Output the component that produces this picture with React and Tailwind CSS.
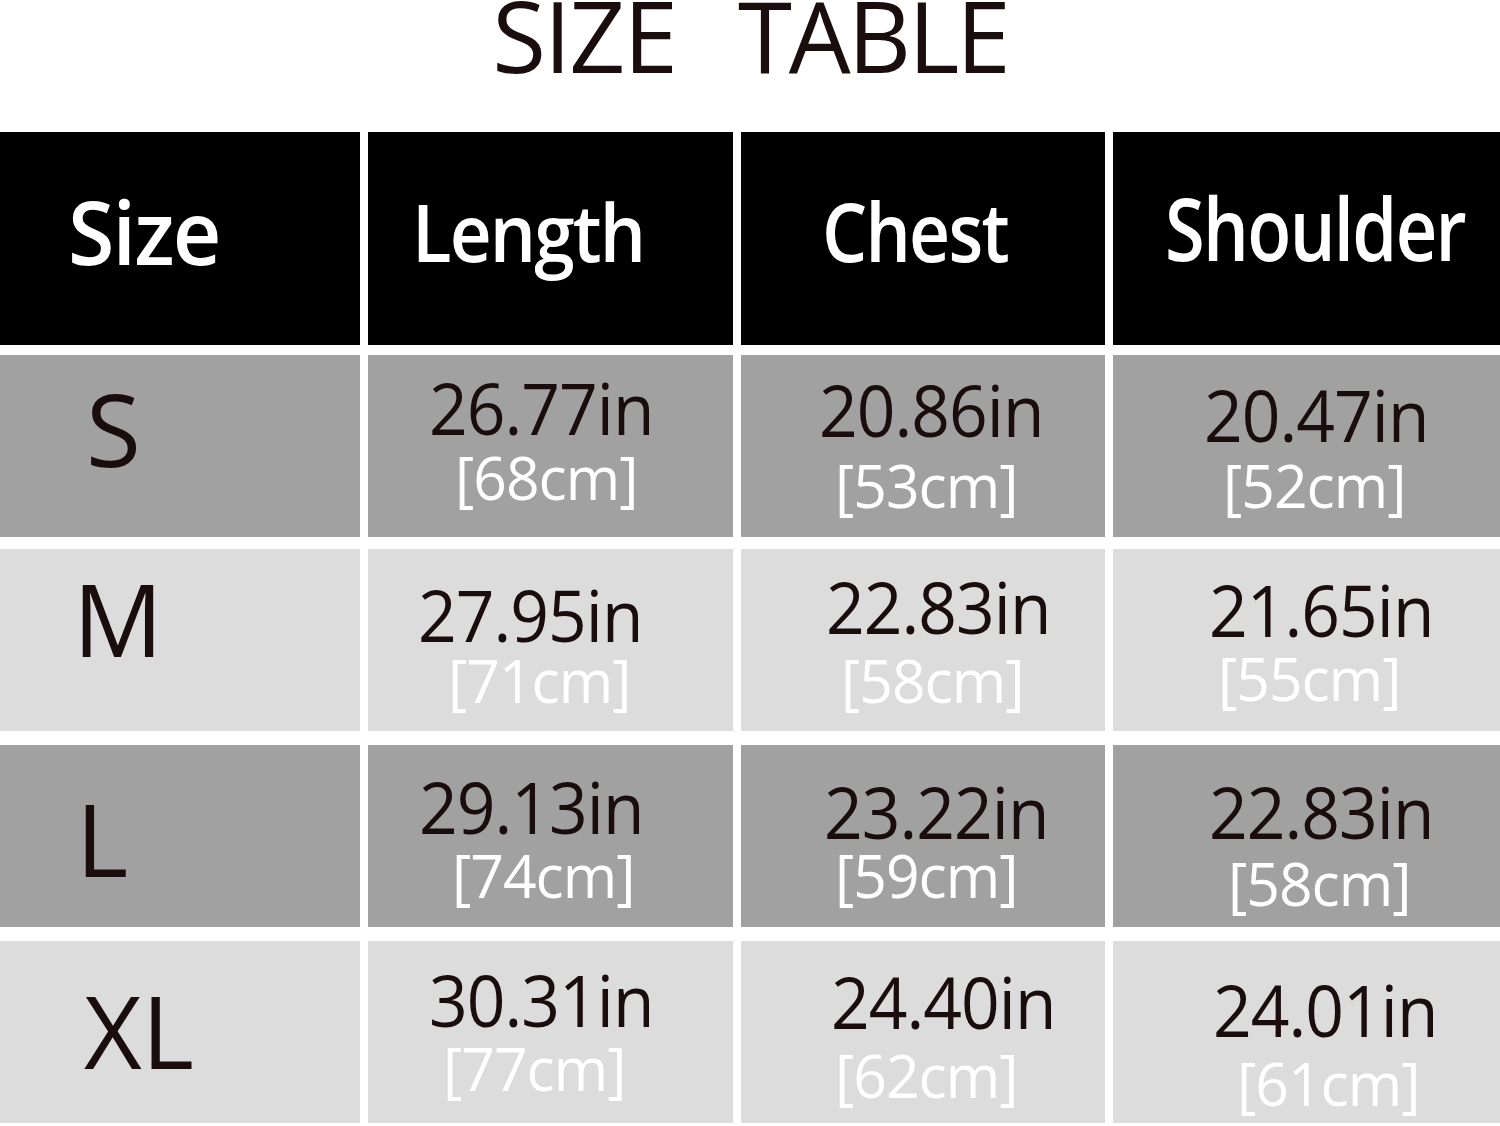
import React from 'react';

const font = { fontFamily: '"Open Sans", "Noto Sans", sans-serif' };

const headers = [
  { label: 'Size', cls: 'text-[88px] ml-[68px] mt-[55px] scale-x-[0.96]' },
  { label: 'Length', cls: 'text-[80px] ml-[44px] mt-[59px] scale-x-[0.91]' },
  { label: 'Chest', cls: 'text-[82px] ml-[81px] mt-[57px] scale-x-[0.87]' },
  { label: 'Shoulder', cls: 'text-[86px] ml-[52px] mt-[53px] scale-x-[0.84]' },
];

const rows = [
  {
    size: 'S',
    sizeCls: 'ml-[86px] mt-[23px]',
    bg: 'bg-[#a1a1a1]',
    gap: 'mt-[10px]',
    cells: [
      { v: '26.77in', cm: '[68cm]', a: 'ml-[61px] mt-[16px]', b: 'ml-[87px] mt-[4px]' },
      { v: '20.86in', cm: '[53cm]', a: 'ml-[78px] mt-[18px]', b: 'ml-[94px] mt-[10px]' },
      { v: '20.47in', cm: '[52cm]', a: 'ml-[91px] mt-[23px]', b: 'ml-[110px] mt-[5px]' },
    ],
  },
  {
    size: 'M',
    sizeCls: 'ml-[73px] mt-[19px]',
    bg: 'bg-[#dcdcdc]',
    gap: 'mt-[12px]',
    cells: [
      { v: '27.95in', cm: '[71cm]', a: 'ml-[50px] mt-[29px]', b: 'ml-[80px] mt-[0px]' },
      { v: '22.83in', cm: '[58cm]', a: 'ml-[85px] mt-[21px]', b: 'ml-[100px] mt-[8px]' },
      { v: '21.65in', cm: '[55cm]', a: 'ml-[96px] mt-[24px]', b: 'ml-[105px] mt-[3px]' },
    ],
  },
  {
    size: 'L',
    sizeCls: 'ml-[76px] mt-[43px]',
    bg: 'bg-[#a1a1a1]',
    gap: 'mt-[14px]',
    cells: [
      { v: '29.13in', cm: '[74cm]', a: 'ml-[51px] mt-[25px]', b: 'ml-[84px] mt-[3px]' },
      { v: '23.22in', cm: '[59cm]', a: 'ml-[83px] mt-[30px]', b: 'ml-[94px] -mt-[2px]' },
      { v: '22.83in', cm: '[58cm]', a: 'ml-[96px] mt-[30px]', b: 'ml-[115px] mt-[6px]' },
    ],
  },
  {
    size: 'XL',
    sizeCls: 'ml-[84px] mt-[39px]',
    bg: 'bg-[#dcdcdc]',
    gap: 'mt-[14px]',
    cells: [
      { v: '30.31in', cm: '[77cm]', a: 'ml-[61px] mt-[22px]', b: 'ml-[75px] mt-[3px]' },
      { v: '24.40in', cm: '[62cm]', a: 'ml-[90px] mt-[24px]', b: 'ml-[94px] mt-[8px]' },
      { v: '24.01in', cm: '[61cm]', a: 'ml-[100px] mt-[32px]', b: 'ml-[124px] mt-[8px]' },
    ],
  },
];

const App = () => {
  return (
    <div className="w-[1500px] h-[1126px] bg-white overflow-hidden text-[#1a0d0e]" style={font}>
      {/* Title */}
      <h1 className="flex justify-center -mt-[14px] h-[98px] text-[98px] leading-none font-medium tracking-[-2px]">
        <span>SIZE</span>
        <span className="ml-[62px] tracking-[-3px]">TABLE</span>
      </h1>

      <div className="mt-[48px]">
        {/* Header row */}
        <div className="grid grid-cols-[360px_365px_364px_387px] gap-x-[8px]">
          {headers.map((h) => (
            <div key={h.label} className="h-[213px] bg-black flex flex-col items-start">
              <span className={`leading-none font-semibold tracking-[-2px] origin-left text-white ${h.cls}`}>{h.label}</span>
            </div>
          ))}
        </div>

        {/* Size rows */}
        {rows.map((row) => (
          <div key={row.size} className={`grid grid-cols-[360px_365px_364px_387px] gap-x-[8px] ${row.gap}`}>
            <div className={`h-[182px] flex flex-col ${row.bg}`}>
              <span className={`text-[100px] leading-none ${row.sizeCls}`}>{row.size}</span>
            </div>
            {row.cells.map((c) => (
              <div key={c.v + c.cm} className={`h-[182px] flex flex-col items-start ${row.bg}`}>
                <span className={`text-[72px] leading-none tracking-[-1px] origin-left scale-x-[0.94] ${c.a}`}>{c.v}</span>
                <span className={`text-[60px] leading-none tracking-[-1px] origin-left scale-x-[0.98] text-white ${c.b}`}>{c.cm}</span>
              </div>
            ))}
          </div>
        ))}
      </div>
    </div>
  );
};

export default App;
